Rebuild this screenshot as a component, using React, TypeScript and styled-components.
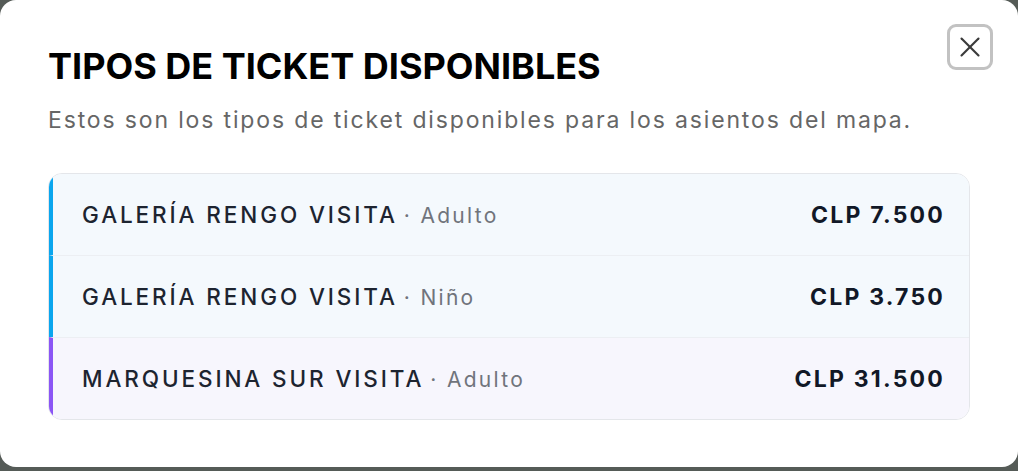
import styled, { createGlobalStyle } from "styled-components";

const GlobalStyle = createGlobalStyle`
  html, body {
    margin: 0;
    padding: 0;
    background: #555b57;
  }
  body {
    font-family: Inter, "Noto Sans", sans-serif;
  }
`;

const Modal = styled.div`
  box-sizing: border-box;
  width: 1018px;
  height: 467px;
  background: #ffffff;
  border-radius: 16px;
  padding: 44px 48px 0 48px;
  display: flex;
  flex-direction: column;
  position: relative;
`;

const Title = styled.h2`
  margin: 0;
  font-size: 36px;
  font-weight: 700;
  color: #000;
  line-height: 44px;
`;

const Subtitle = styled.p`
  margin: 17px 0 0 0;
  font-size: 23px;
  line-height: 30px;
  letter-spacing: 1.85px;
  color: #666;
`;

const CloseButton = styled.button`
  position: absolute;
  top: 24px;
  right: 25px;
  width: 46px;
  height: 46px;
  box-sizing: border-box;
  border: 3px solid #c2c2c2;
  border-radius: 9px;
  background: #fff;
  display: flex;
  align-items: center;
  justify-content: center;
  color: #3a3a3a;
  padding: 0;
`;

const List = styled.div`
  margin-top: 38px;
  border: 1px solid #e4e6ea;
  border-radius: 14px;
  overflow: hidden;
  display: flex;
  flex-direction: column;
`;

const Row = styled.div<{ $accent: string; $bg: string }>`
  height: 81px;
  display: flex;
  align-items: center;
  justify-content: space-between;
  padding: 0 24px 0 29px;
  background: ${(p) => p.$bg};
  border-left: 4px solid ${(p) => p.$accent};
  & + & {
    border-top: 1px solid #eceff3;
  }
`;

const Name = styled.span`
  font-size: 22.5px;
  font-weight: 500;
  color: #1d2430;
  letter-spacing: 2.9px;
`;

const Kind = styled.span`
  font-size: 21px;
  color: #70747c;
  letter-spacing: 2.3px;
  margin-left: 6px;
`;

const Price = styled.span`
  font-size: 23px;
  font-weight: 700;
  color: #111827;
  letter-spacing: 2.2px;
`;

const tickets = [
  { name: "GALERÍA RENGO VISITA", kind: "Adulto", price: "CLP 7.500", accent: "#0aa6ee", bg: "#f4f9fd" },
  { name: "GALERÍA RENGO VISITA", kind: "Niño", price: "CLP 3.750", accent: "#0aa6ee", bg: "#f4f9fd" },
  { name: "MARQUESINA SUR VISITA", kind: "Adulto", price: "CLP 31.500", accent: "#8b55f5", bg: "#f7f6fd" },
];

export default function App() {
  return (
    <>
      <GlobalStyle />
      <Modal>
        <CloseButton aria-label="Cerrar">
          <svg width="20" height="20" viewBox="0 0 20 20" fill="none" stroke="currentColor" strokeWidth="2.1" strokeLinecap="round">
            <line x1="1.5" y1="1.5" x2="18.5" y2="18.5" />
            <line x1="18.5" y1="1.5" x2="1.5" y2="18.5" />
          </svg>
        </CloseButton>
        <Title>TIPOS DE TICKET DISPONIBLES</Title>
        <Subtitle>Estos son los tipos de ticket disponibles para los asientos del mapa.</Subtitle>
        <List>
          {tickets.map((t, i) => (
            <Row key={i} $accent={t.accent} $bg={t.bg}>
              <div>
                <Name>{t.name}</Name>
                <Kind>· {t.kind}</Kind>
              </div>
              <Price>{t.price}</Price>
            </Row>
          ))}
        </List>
      </Modal>
    </>
  );
}
